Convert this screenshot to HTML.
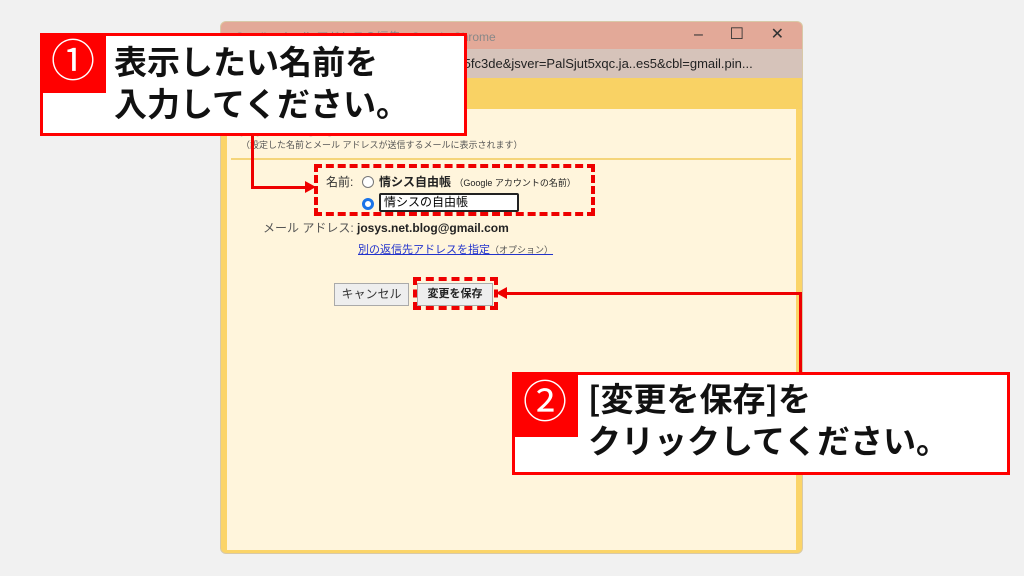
<!DOCTYPE html>
<html><head><meta charset="utf-8"><style>
*{margin:0;padding:0;box-sizing:border-box}
body{width:1024px;height:576px;background:#f1f1f1;position:relative;overflow:hidden;font-family:"Liberation Sans","Noto Sans CJK JP",sans-serif}
.a{position:absolute}
.win{left:220px;top:21px;width:583px;height:533px;border-radius:6px;background:#fbd468;border:1px solid #d8c9a8;overflow:hidden}
.title{left:0;top:0;width:100%;height:27px;background:#e3a998}
.url{left:0;top:27px;width:100%;height:29px;background:#d6c3ba;color:#222;font-size:13px;line-height:29px;padding-left:10px;white-space:nowrap}
.yh{left:0;top:56px;width:100%;height:31px;background:#f9d264}
.inner{left:6px;top:87px;right:6px;bottom:3px;background:#fff5dc}
.call{background:#fff;border:3px solid #f00}
.num{background:#f00;color:#fff;font-size:44px;text-align:center}
.txt{font-size:33px;font-weight:bold;line-height:42px;color:#111;white-space:nowrap;font-family:"Noto Sans CJK JP",sans-serif}
.dash{border:4px dashed #e00}
.line{background:#e00}
</style></head><body>
<div class="a win">
 <div class="a title"><span class="a" style="left:14px;top:6px;font-size:12px;color:#888">Gmail - メール アドレスの編集 - Google Chrome</span><span class="a" style="right:18px;top:2px;font-size:16px;color:#333">–&nbsp;&nbsp;&nbsp;&nbsp;&nbsp;&nbsp;☐&nbsp;&nbsp;&nbsp;&nbsp;&nbsp;&nbsp;✕</span></div>
 <div class="a url">mail.google.com/mail/u/0/?ui=2&amp;ik=d1cc5fc3de&amp;jsver=PalSjut5xqc.ja..es5&amp;cbl=gmail.pin...</div>
 <div class="a yh"><span class="a" style="left:12px;top:7px;font-size:14px;color:#c9b48a;font-weight:bold">メール アドレスの編集</span></div>
 <div class="a inner">
  <div class="a" style="left:14px;top:12px;font-size:12px;color:#bbb">josys.net.blog@gmail.com の情報を編集</div>
  <div class="a" style="left:14px;top:29px;font-size:9px;color:#555">（設定した名前とメール アドレスが送信するメールに表示されます）</div>
  <div class="a" style="left:4px;top:49px;width:560px;height:2px;background:#f5d57a"></div>
  <div class="a" style="left:99px;top:64px;font-size:12px;color:#333">名前:</div>
  <div class="a" style="left:135px;top:67px;width:12px;height:12px;border:1px solid #777;border-radius:50%;background:#fff"></div>
  <div class="a" style="left:152px;top:64px;font-size:12px;font-weight:bold;color:#222">情シス自由帳 <span style="font-weight:normal;font-size:9px">（Google アカウントの名前）</span></div>
  <div class="a" style="left:135px;top:89px;width:12px;height:12px;border:3px solid #1a73e8;border-radius:50%;background:#fff"></div>
  <div class="a" style="left:152px;top:84px;width:140px;height:19px;border:2px solid #222;border-radius:2px;background:#fff;font-size:12px;padding-left:3px;line-height:15px">情シスの自由帳</div>
  <div class="a" style="left:36px;top:110px;font-size:12px;color:#555">メール アドレス: <b style="color:#222">josys.net.blog@gmail.com</b></div>
  <div class="a" style="left:131px;top:132px;font-size:11px;color:#2233cc;text-decoration:underline">別の返信先アドレスを指定<span style="color:#555;text-decoration:none;font-size:9px">（オプション）</span></div>
  <div class="a" style="left:107px;top:174px;width:75px;height:23px;border:1px solid #aaa;background:#eee;font-size:12px;line-height:21px;text-align:center;color:#333">キャンセル</div>
  <div class="a" style="left:190px;top:174px;width:76px;height:23px;border:1px solid #aaa;background:#eee;font-size:11px;font-weight:bold;line-height:21px;text-align:center;color:#222">変更を保存</div>
 </div>
</div>
<div class="a dash" style="left:314px;top:164px;width:281px;height:52px"></div>
<div class="a dash" style="left:413px;top:277px;width:85px;height:33px"></div>
<div class="a line" style="left:251px;top:134px;width:3px;height:55px"></div>
<div class="a line" style="left:251px;top:186px;width:56px;height:3px"></div>
<div class="a" style="left:305px;top:181px;border-left:11px solid #e00;border-top:6px solid transparent;border-bottom:6px solid transparent"></div>
<div class="a line" style="left:799px;top:292px;width:3px;height:80px"></div>
<div class="a line" style="left:505px;top:292px;width:297px;height:3px"></div>
<div class="a" style="left:496px;top:287px;border-right:11px solid #e00;border-top:6px solid transparent;border-bottom:6px solid transparent"></div>
<div class="a call" style="left:40px;top:33px;width:427px;height:103px"></div>
<div class="a num" style="left:40px;top:33px;width:66px;height:60px;line-height:58px">①</div>
<div class="a txt" style="left:114px;top:39px">表示したい名前を<br>入力してください。</div>
<div class="a call" style="left:512px;top:372px;width:498px;height:103px"></div>
<div class="a num" style="left:512px;top:372px;width:66px;height:65px;line-height:62px">②</div>
<div class="a txt" style="left:588px;top:376px">[変更を保存]を<br>クリックしてください。</div>
</body></html>
